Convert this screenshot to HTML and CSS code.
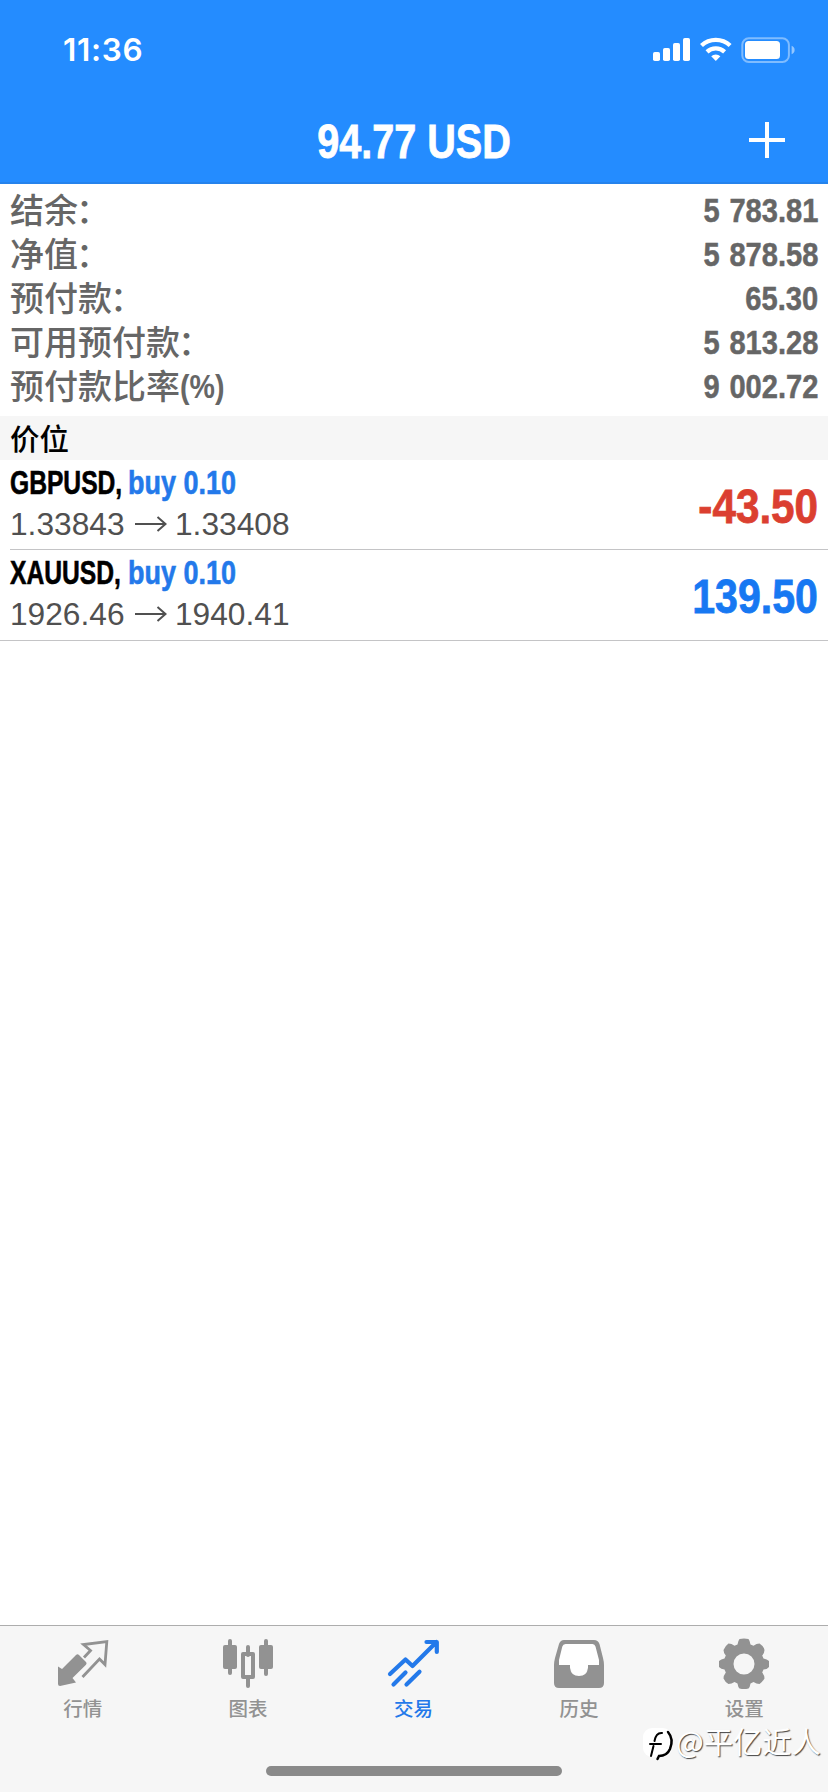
FILE: index.html
```html
<!DOCTYPE html>
<html lang="zh-CN">
<head>
<meta charset="utf-8">
<meta name="viewport" content="width=device-width">
<title>交易</title>
<link rel="stylesheet" href="styles.css">
</head>
<body>
<div class="app">
  <header class="header">
    <div class="status">
      <span class="time">11:36</span>
      <svg class="status-icons" width="144" height="28" viewBox="0 0 144 28" fill="#fff">
        <rect x="1" y="16" width="7" height="9" rx="1.8"/><rect x="11" y="12" width="7" height="13" rx="1.8"/><rect x="21" y="7" width="7" height="18" rx="1.8"/><rect x="31" y="2" width="7" height="23" rx="1.8"/>
        <g fill="none" stroke="#fff" stroke-width="4.3"><path d="M49.5 9.5a21 21 0 0 1 28.6 0"/><path d="M55 15.8a13 13 0 0 1 17.6 0"/></g>
        <path d="M59.2 20.2a7 7 0 0 1 9.2 0L63.8 25z"/>
        <rect x="90.3" y="2.3" width="46.6" height="23.6" rx="6.5" fill="none" stroke="#fff" stroke-opacity=".42" stroke-width="2"/>
        <rect x="93" y="5" width="35" height="18" rx="3.5"/><path d="M139.6 9.7q3 1.2 3 4.3t-3 4.3z" opacity=".5"/>
      </svg>
    </div>
    <div class="nav">
      <h1 class="title">94.77 USD</h1>
      <svg class="add" width="36" height="36" viewBox="0 0 36 36" stroke="#fff" stroke-width="4"><path d="M0 18H36M18 0V36"/></svg>
    </div>
  </header>
  <dl class="summary">
    <div class="line"><dt>结余<span class="colon">：</span></dt><dd>5 783.81</dd></div>
    <div class="line"><dt>净值<span class="colon">：</span></dt><dd>5 878.58</dd></div>
    <div class="line"><dt>预付款<span class="colon">：</span></dt><dd>65.30</dd></div>
    <div class="line"><dt>可用预付款<span class="colon">：</span></dt><dd>5 813.28</dd></div>
    <div class="line"><dt>预付款比率<span class="unit">(%)</span></dt><dd>9 002.72</dd></div>
  </dl>
  <h2 class="section">价位</h2>
  <main class="positions">
    <article class="position">
      <div class="info">
        <div class="deal"><span class="symbol"><b>GBPUSD,</b></span><span class="side">buy 0.10</span></div>
        <div class="prices"><span class="from">1.33843</span><svg class="arrow" width="32" height="16" viewBox="0 0 32 16"><path d="M0 8H30M22.500 1 30.500 8 22.500 15"/></svg><span>1.33408</span></div>
      </div>
      <strong class="profit loss">-43.50</strong>
    </article>
    <article class="position last">
      <div class="info">
        <div class="deal"><span class="symbol"><b>XAUUSD,</b></span><span class="side">buy 0.10</span></div>
        <div class="prices"><span class="from">1926.46</span><svg class="arrow" width="32" height="16" viewBox="0 0 32 16"><path d="M0 8H30M22.500 1 30.500 8 22.500 15"/></svg><span>1940.41</span></div>
      </div>
      <strong class="profit">139.50</strong>
    </article>
  </main>
  <footer class="footer">
    <nav class="tabs">
      <a class="tab"><svg width="52" height="52" viewBox="0 0 52 52"><path fill="currentColor" d="M1 31.5 5 34 19 20Q20.5 18.7 22 20L29 27Q30.200 28.400 29 29.700L15.500 43 19 47.500 3 51Q1 51 1 49z"/><path fill="none" stroke="currentColor" stroke-width="2.8" d="M27 22.500 33.500 15.500 26.500 9.500 49.800 6.500 48 29.500 42.500 24 25.500 42"/></svg><span>行情</span></a>
      <a class="tab"><svg width="52" height="52" viewBox="0 0 52 52"><g fill="currentColor"><rect x="1" y="10" width="14" height="24" rx="2"/><rect x="6" y="4" width="4" height="36" rx="2"/><rect x="37" y="10" width="14" height="24" rx="2"/><rect x="42" y="4" width="4" height="37" rx="2"/><rect x="24" y="10" width="4" height="12" rx="2"/><rect x="24" y="40" width="4" height="13" rx="2"/></g><rect x="21" y="19" width="10" height="23" fill="none" stroke="currentColor" stroke-width="4" stroke-linejoin="round"/></svg><span>图表</span></a>
      <a class="tab active"><svg width="52" height="52" viewBox="0 0 52 52" fill="none" stroke="currentColor" stroke-width="4.200" stroke-linecap="round" stroke-linejoin="round"><path d="M3 39 18.500 24.500 25.500 31 49.500 7M39.500 7H49.800V17M6.500 49.500 18.500 37.500M19.500 49.500 32.500 36.800"/></svg><span>交易</span></a>
      <a class="tab"><svg width="52" height="52" viewBox="0 0 52 52"><path fill="#fff" d="M11 7H41L48 26V32H35L31 42H21L17 32H4V26Z"/><path fill="currentColor" fill-rule="evenodd" d="M11 5H41Q45 5 46.500 9L50 23Q51 27 51 30V48Q51 53 46 53H6Q1 53 1 48V30Q1 27 2 23L6 9Q7.500 5 11 5ZM12.500 9Q10 9 9.300 11.500L6 25V30H17V33Q18 41 26 41T35 33V30H46V25L42.500 11.500Q41.800 9 39.500 9Z"/></svg><span>历史</span></a>
      <a class="tab"><svg width="52" height="52" viewBox="0 0 52 52"><path fill="currentColor" fill-rule="evenodd" d="M21.500 4Q26 3 30.500 4Q32 6 32.500 9.500L35.500 10.700Q38.500 8.500 41.500 8.500Q45.500 11 46.500 15Q46.500 18 44.200 20.500L45.500 23.500Q49 24 51 26V32Q49 34.500 45.500 34.500L44.200 37.500Q46.500 40.500 46.500 43.500Q44.500 47 41.500 49Q38.500 49 35.500 47L32.500 48.500Q32 52 30.500 53.500Q26 54.500 21.500 53.500Q20 52 19.500 48.500L16.500 47Q13.500 49 10.500 49Q7 47 5.500 43.500Q5.500 40.500 7.800 37.500L6.500 34.500Q3 34 1 32V26Q3 24 6.500 23.500L7.800 20.500Q5.500 18 5.500 15Q7 11 10.500 8.500Q13.500 8.500 16.500 10.700L19.500 9.500Q20 6 21.500 4ZM26 18.500a10.500 10.500 0 1 0 0 21a10.500 10.500 0 1 0 0-21Z"/></svg><span>设置</span></a>
    </nav>
    <div class="home-bar"></div>
    <div class="watermark">
      <svg width="34" height="34" viewBox="0 0 34 34"><rect x="1" y="1" width="29" height="29" rx="9" fill="#fff"/><g fill="none" stroke="#000" stroke-linecap="round"><path stroke-width="2" d="M9 29 11.500 19M12.500 14Q14 5.500 20 6M8 17H19"/><path stroke-width="2.500" d="M26 5Q32 12 28 22Q25 29 17 29L15.500 32"/></g></svg>
      <span>@平亿近人</span>
    </div>
  </footer>
</div>
</body>
</html>
```
FILE: styles.css
```css
* { box-sizing: border-box; }
body { margin: 0; background: #fff; font-family: "Liberation Sans", "Noto Sans CJK SC", sans-serif; }
.app { width: 828px; height: 1792px; display: flex; flex-direction: column; overflow: hidden; }

.header { height: 184px; flex: none; background: #248cff; border-bottom: 2px solid #2583ec; color: #fff; }
.status { height: 98px; padding: 36px 32px 0 63px; display: flex; justify-content: space-between; align-items: flex-start; }
.time { font: 600 31.500px/28px Inter, sans-serif; letter-spacing: .7px; }
.nav { display: grid; grid-template-columns: 78px 1fr 78px; align-items: center; height: 86px; }
.title { grid-column: 2; margin: 0; text-align: center; font-size: 48px; line-height: 88px; font-weight: 700; white-space: nowrap; transform: scaleX(.825); -webkit-text-stroke: .8px currentColor; }
.add { justify-self: end; margin-right: 43px; margin-bottom: 4px; }

.summary { margin: 0; padding: 4px 10px 8px; height: 232px; flex: none; color: #666; }
.line { display: flex; justify-content: space-between; height: 44px; line-height: 44px; font-size: 34px; }
.line dt { margin-top: -1px; font-family: "Noto Sans CJK SC", sans-serif; font-weight: 500; white-space: nowrap; }
.line dd { margin: 0; font-weight: 700; word-spacing: 2px; transform: scaleX(.855); transform-origin: right; -webkit-text-stroke: .5px currentColor; }
.colon { margin-left: -2px; }
.unit { display: inline-block; font: 700 34px/40px "Liberation Sans", sans-serif; transform: scaleX(.84) translateY(-1px); transform-origin: left; }

.section { height: 44px; flex: none; margin: 0; padding-left: 10px; background: #f6f6f6; color: #000; font: 500 29.500px/42px "Noto Sans CJK SC", sans-serif; }

.positions { flex: 1; }
.position { display: flex; justify-content: space-between; height: 90px; padding-right: 10px; margin-left: 10px; border-bottom: 1px solid #c4c4c6; }
.position.last { height: 91px; margin-left: 0; padding-left: 10px; }
.deal { display: flex; height: 44px; padding-top: 1px; font-size: 33.500px; line-height: 44px; font-weight: 700; white-space: nowrap; -webkit-text-stroke: .6px currentColor; }
.symbol { width: 118px; }
.symbol b { display: inline-block; color: #000; transform: scaleX(.735); transform-origin: left; }
.side { color: #2379ea; transform: scaleX(.805); transform-origin: left; }
.prices { display: flex; align-items: center; height: 40px; color: #505050; font-size: 31.700px; line-height: 40px; }
.from { width: 125px; }
.arrow { margin-right: 8px; fill: none; stroke: #505050; stroke-width: 2; }
.profit { color: #1778f2; font-size: 48px; line-height: 93px; transform: scaleX(.855); transform-origin: right; -webkit-text-stroke: .8px currentColor; }
.loss { color: #db3f30; transform: scaleX(.88); }

.footer { position: relative; height: 167px; flex: none; background: #f6f6f6; border-top: 1px solid #adadad; }
.tabs { display: grid; grid-template-columns: repeat(5, 1fr); padding: 9px 1px 0 0; }
.tab { display: flex; flex-direction: column; align-items: center; color: #929292; }
.tab svg { overflow: visible; }
.tab span { margin-top: 7px; font: 500 19.500px/28px "Noto Sans CJK SC", sans-serif; }
.active { color: #2379ea; }
.home-bar { width: 296px; height: 10px; margin: 44px auto 0; border-radius: 5px; background: #8a8a8a; }
.watermark { position: absolute; left: 642px; top: 101px; display: flex; color: #fff; font: 400 29.300px/26px "Noto Sans CJK SC", sans-serif; white-space: nowrap; text-shadow: 1px 1px 1px #444; }
```
